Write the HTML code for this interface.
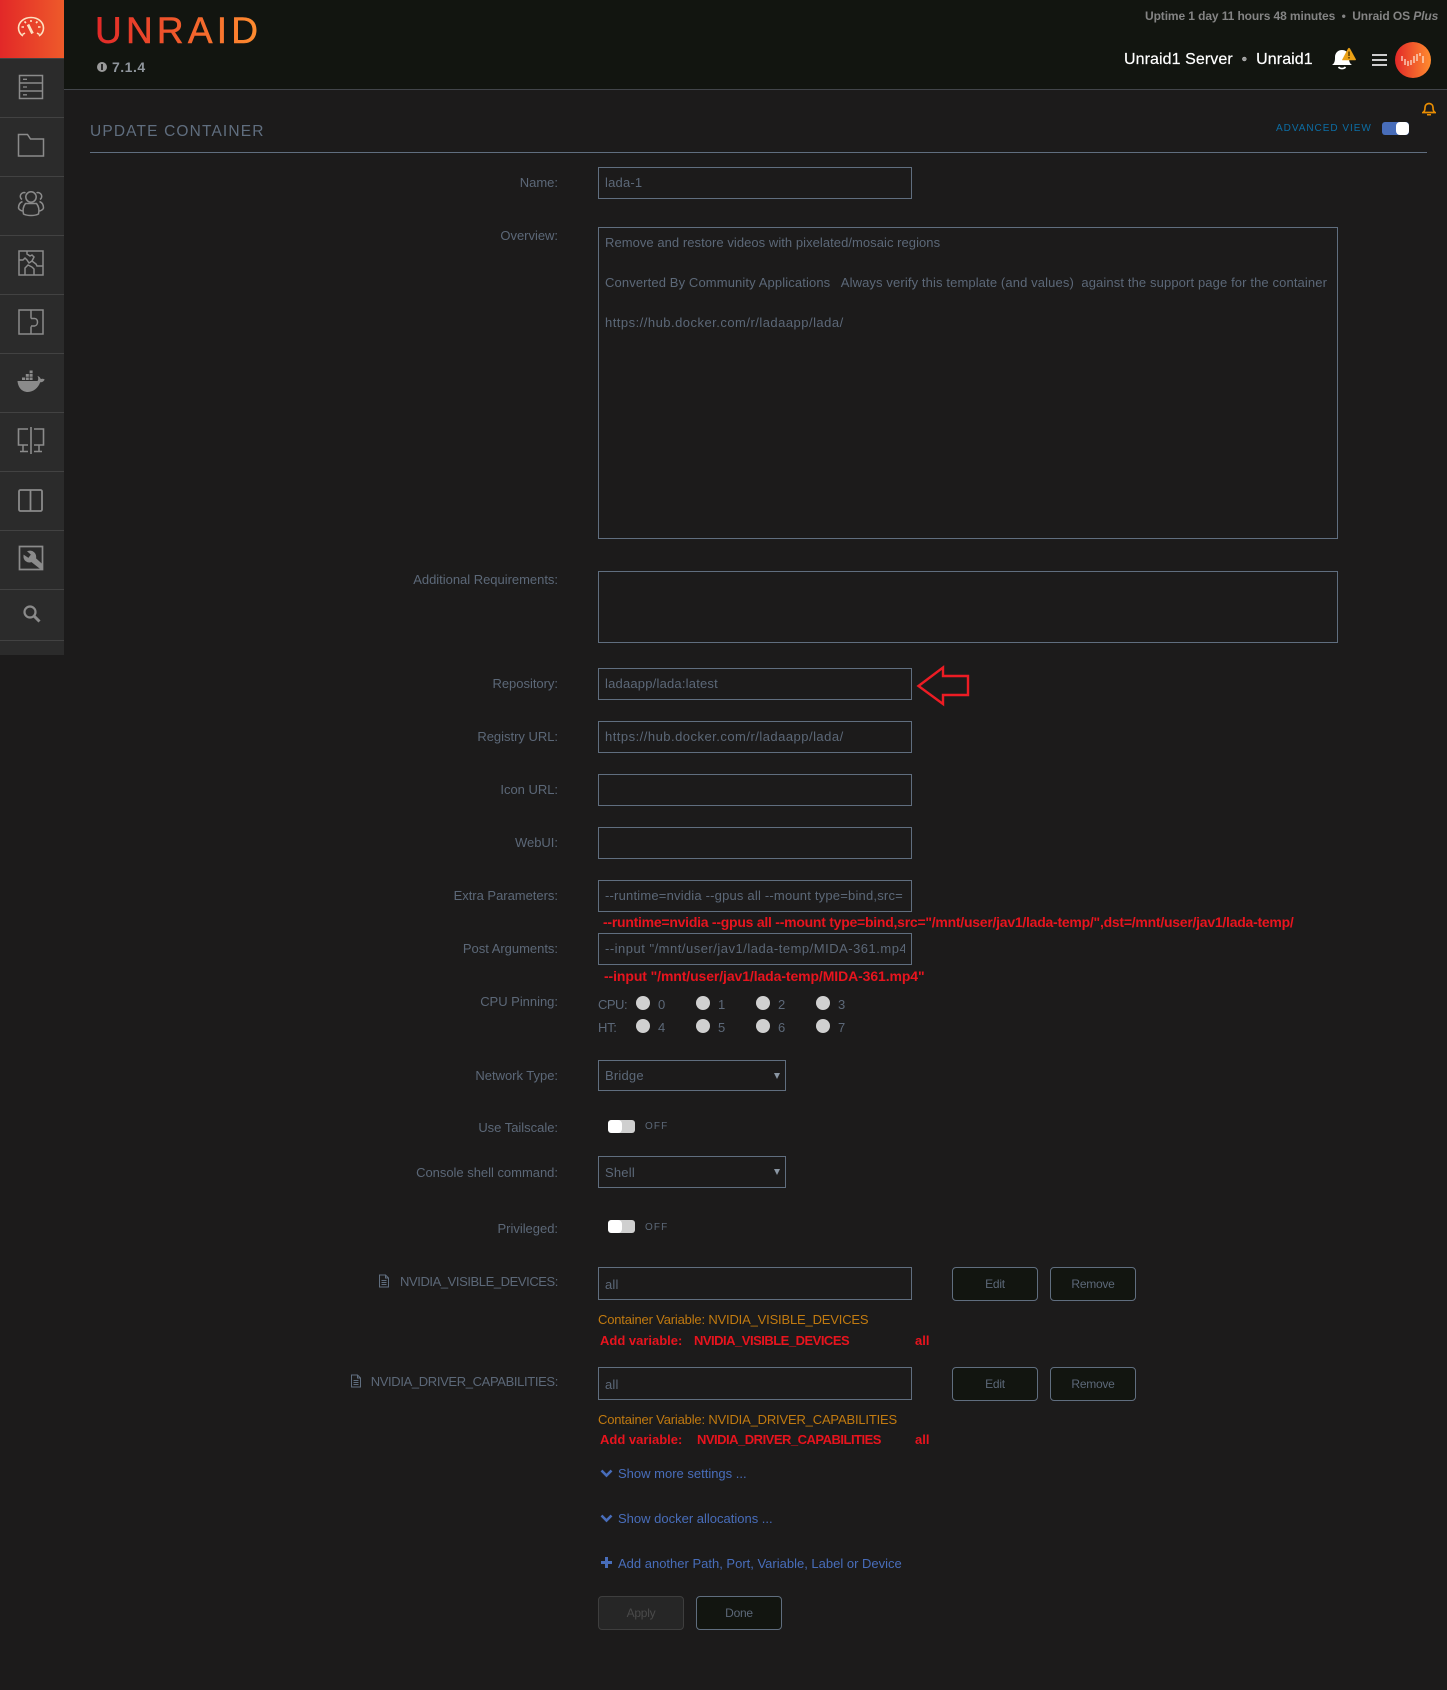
<!DOCTYPE html>
<html><head><meta charset="utf-8"><title>Update Container</title>
<style>
html,body{margin:0;padding:0;background:#1c1b1b}
body{position:relative;width:1447px;height:1690px;overflow:hidden;font-family:"Liberation Sans",sans-serif;font-size:13px;color:#5c6878}
div,svg{position:absolute}
.t{line-height:16px;white-space:nowrap}
.l{right:889px;line-height:16px;white-space:nowrap;letter-spacing:-.02px}
.i{left:598px;width:312px;height:30px;border:1px solid #606e7f;line-height:30px;white-space:nowrap;overflow:hidden;letter-spacing:.2px}
.i span{display:block;margin:0 6px;overflow:hidden}
.s{left:598px;width:186px;height:29px;border:1px solid #606e7f;line-height:29px;text-indent:6px;letter-spacing:.2px}
.s:after{content:"";position:absolute;right:5px;top:12px;border:3.5px solid transparent;border-top:6px solid #8a96a3;border-bottom:0}
.sep{left:0;width:64px;height:1px;background:#424242}
.ic{left:17px;width:28px;height:28px;fill:none;stroke:#8b8b8b;stroke-width:1.5}
.b{border:1px solid #606e7f;border-radius:4px;background:#121510;width:84px;height:32px;line-height:32px;text-align:center;font-size:12px;letter-spacing:-.25px}
.c{width:14px;height:14px;border-radius:50%;background:#d0d0d0}
.r{color:#e8141e;font-weight:bold;white-space:nowrap;line-height:16px}
.o{color:#c17a10;left:598px;line-height:16px;white-space:nowrap;letter-spacing:-.18px}
.k{color:#486dba;left:618px;line-height:16px;white-space:nowrap}
.tg{left:608px;width:27px;height:13px;border-radius:3px;background:#cfcfcf}
.tg:before{content:"";position:absolute;left:0;top:0;width:14px;height:13px;border-radius:4px;background:#fff}
.off{left:645px;font-size:10px;letter-spacing:1.1px;line-height:12px}
</style></head><body>

<!-- header -->
<div style="left:0;top:0;width:1447px;height:89px;background:#121510"></div>
<div style="left:0;top:89px;width:1447px;height:1px;background:#42454a"></div>

<!-- sidebar -->
<div style="left:0;top:0;width:64px;height:655px;background:#2b2b2b"></div>
<div style="left:0;top:0;width:64px;height:58px;background:linear-gradient(90deg,#e22828,#ee5a2a)"></div>
<div class="sep" style="top:58px"></div><div class="sep" style="top:117px"></div><div class="sep" style="top:176px"></div><div class="sep" style="top:235px"></div><div class="sep" style="top:294px"></div><div class="sep" style="top:353px"></div><div class="sep" style="top:412px"></div><div class="sep" style="top:471px"></div><div class="sep" style="top:530px"></div><div class="sep" style="top:589px"></div><div class="sep" style="top:640px"></div>

<svg class="ic" style="top:14px;stroke:#fde0c0;stroke-width:1.6" viewBox="0 0 28 28"><path d="M6 22C3 20 1.500 17 1.500 14 1.500 8 7 3.500 14 3.500S26.500 8 26.500 14C26.500 17 25 20 22 22"/><path d="M5.500 20.500 8 19M22.500 20.500 20 19M4.500 13h2.500M21 13h2.500M14 6v2M7.500 7.500l1.500 1.500M20.500 7.500l-1.500 1.500"/><path d="M11 10.500l4.500 9" stroke-width="2.800"/></svg>
<svg class="ic" style="top:73px" viewBox="0 0 28 28"><path d="M2.500 2.500h23v23h-23zM2.500 10h23M2.500 18h23"/><path d="M6 6.300h4M6 14h4M6 21.800h4" stroke-width="1.300"/></svg>
<svg class="ic" style="top:131px" viewBox="0 0 28 28"><path d="M1.500 3.500h9l3 4.500h13v17h-25z"/></svg>
<svg class="ic" style="top:190px" viewBox="0 0 28 28"><circle cx="14" cy="7" r="5.200"/><path d="M8.500 2.800A3.800 3.800 0 0 0 5 9.500M19.500 2.800A3.800 3.800 0 0 1 23 9.500"/><path d="M6.500 24c-1-4 0-8 2-10.500h11c2 2.500 3 6.500 2 10.500-4 2-11 2-15 0z"/><path d="M5.500 11.500C3 12.500 1.500 15 1.500 18c.5 1.500 2 2.500 4 3M22.500 11.500c2.500 1 4 3.500 4 6.500-.5 1.500-2 2.500-4 3"/></svg>
<svg class="ic" style="top:249px" viewBox="0 0 28 28"><path d="M2 2h24v24H2z"/><path d="M2 11h4l2-2 2 2 2 3 3-2 4 3 1 2 6 0M10 2v3l3 2 2-1 2 2-2 4M15 18l2 2v6M8 26v-7l3-3 4 2" stroke-width="1.500"/></svg>
<svg class="ic" style="top:308px" viewBox="0 0 28 28"><path d="M2 2h24v24H2zM14 2v8.500M14 18.500v7.500M14 10.500h3.500c4 0 4 7 0 7.500H14"/></svg>
<svg class="ic" style="top:368px;fill:#8b8b8b;stroke:none" viewBox="0 0 28 28"><path d="M.5 13h20c1-1.500 1-3 0-5 2 .5 3 2 3.200 3 1.500-.5 3-.3 4 .5-1 2-2.500 2.800-4.500 2.800C21 20.500 16 24 11 24 4.500 24 1 19 .5 13z"/><path d="M5 9.500h3V12H5zM8.800 9.500h3V12h-3zM12.600 9.500h3V12h-3zM8.800 6h3v2.800h-3zM12.600 6h3v2.800h-3zM12.600 2.500h3v2.800h-3z"/></svg>
<svg class="ic" style="top:426px" viewBox="0 0 28 28"><path d="M11 3H1.500v16H11M17 3h9.500v16H17M14 1v27" stroke-width="1.600"/><path d="M6 19v6M22 19v6M3 25.500h8M17 25.500h8"/></svg>
<svg class="ic" style="top:487px" viewBox="0 0 28 28"><rect x="2" y="3" width="23" height="21" rx="1.500" stroke-width="1.800"/><path d="M13.500 3v21" stroke-width="1.800"/></svg>
<svg class="ic" style="top:544px" viewBox="0 0 28 28"><path d="M2.500 2.500h23v23h-23z" stroke-width="1.700"/><path d="M24 25 14.500 17.500c-3.500 1.500-8-1-7.500-6l4.500 3 3-4-3.500-3c4.500-1.500 8.500 2 7.500 7l6 5.500V25z" fill="#8b8b8b" stroke-width="1"/></svg>
<svg class="ic" style="top:600px;left:18px" viewBox="0 0 28 28"><circle cx="12" cy="12" r="5.500" stroke-width="2.200"/><path d="M16 16l5.500 5.500" stroke-width="3"/></svg>

<!-- logo -->
<svg style="left:90px;top:8px;width:180px;height:44px" viewBox="90 8 180 44"><defs><linearGradient id="g" gradientUnits="userSpaceOnUse" x1="96" y1="0" x2="258" y2="0"><stop offset="0" stop-color="#e22828"/><stop offset="1" stop-color="#ff8c2f"/></linearGradient></defs><text x="95" y="43" font-family="Liberation Sans" font-size="37" fill="url(#g)" stroke="url(#g)" stroke-width=".5" textLength="163" lengthAdjust="spacing">UNRAID</text></svg>
<div style="left:97px;top:62px;width:10px;height:10px;border-radius:50%;background:#9a9a9a"></div>
<div style="left:101px;top:64px;width:2px;height:6px;background:#2a2a2a"></div>
<div class="t" style="left:112px;top:59px;font-size:14px;font-weight:bold;color:#8f959c;letter-spacing:.5px">7.1.4</div>

<!-- header right -->
<div class="t" style="left:1145px;top:8px;font-size:12px;font-weight:bold;color:#848484;letter-spacing:-.1px">Uptime 1 day 11 hours 48 minutes &nbsp;•&nbsp; Unraid OS <i>Plus</i></div>
<div class="t" style="left:1124px;top:52px;font-size:16px;color:#fff;letter-spacing:.08px;-webkit-text-stroke:.2px #fff">Unraid1 Server &nbsp;<span style="color:#999;font-size:15px">•</span>&nbsp; Unraid1</div>
<svg style="left:1330px;top:44px;width:30px;height:28px" viewBox="0 0 30 28"><path d="M2 21c3-2 3-5 3-8 0-4 3-7 7-7s7 3 7 7c0 3 0 6 3 8z" fill="#fff"/><path d="M8.500 23a4 3 0 0 0 7 0" fill="none" stroke="#fff" stroke-width="1.600"/><path d="M12 16 18 4.500l1-.8 1 .8 6 11-.5.8H12.500z" fill="#eba116"/><path d="M19 7.500v4.500M19 13v1.500" stroke="#5a3d05" stroke-width="1.500"/></svg>
<div style="left:1372px;top:54px;width:15px;height:2px;background:#ccc"></div><div style="left:1372px;top:59px;width:15px;height:2px;background:#ccc"></div><div style="left:1372px;top:64px;width:15px;height:2px;background:#ccc"></div>
<div style="left:1395px;top:42px;width:36px;height:36px;border-radius:50%;background:linear-gradient(90deg,#e22828,#ff8c2f)"></div>
<svg style="left:1400px;top:52px;width:26px;height:16px" viewBox="0 0 26 16"><path d="M2 4v5M5 7v6M8 9v5M11 8v5M14 4v7M17 2v7M20 1v3M23 4v7" stroke="#fde8d8" stroke-width="1.200" fill="none"/></svg>

<svg style="left:1422px;top:102px;width:14px;height:14px" viewBox="0 0 14 14"><path d="M1 10.500c1.500-1 2-2 2-5 0-2.500 1.800-4 4-4s4 1.500 4 4c0 3 .5 4 2 5z" fill="none" stroke="#e98d03" stroke-width="1.700"/><path d="M5 12h4v1.500H5z" fill="#e98d03"/></svg>

<!-- title -->
<div class="t" style="left:90px;top:124px;font-size:15.500px;letter-spacing:1.15px;color:#606e7f">UPDATE CONTAINER</div>
<div style="left:90px;top:152px;width:1337px;height:1px;background:#606e7f"></div>
<div class="t" style="left:1276px;top:121px;font-size:10px;letter-spacing:.97px;color:#0c6ea5">ADVANCED VIEW</div>
<div style="left:1382px;top:122px;width:27px;height:13px;border-radius:3px;background:#486dba"></div>
<div style="left:1396px;top:122px;width:13px;height:13px;border-radius:4px;background:#fff"></div>

<!-- labels -->
<div class="l" style="top:175px">Name:</div>
<div class="l" style="top:228px">Overview:</div>
<div class="l" style="top:572px">Additional Requirements:</div>
<div class="l" style="top:676px">Repository:</div>
<div class="l" style="top:729px">Registry URL:</div>
<div class="l" style="top:782px">Icon URL:</div>
<div class="l" style="top:835px">WebUI:</div>
<div class="l" style="top:888px">Extra Parameters:</div>
<div class="l" style="top:941px">Post Arguments:</div>
<div class="l" style="top:994px">CPU Pinning:</div>
<div class="l" style="top:1068px">Network Type:</div>
<div class="l" style="top:1120px">Use Tailscale:</div>
<div class="l" style="top:1165px">Console shell command:</div>
<div class="l" style="top:1221px">Privileged:</div>
<div class="l" style="top:1274px;letter-spacing:-.42px">NVIDIA_VISIBLE_DEVICES:</div>
<div class="l" style="top:1374px;letter-spacing:-.36px">NVIDIA_DRIVER_CAPABILITIES:</div>

<svg style="left:378px;top:1274px;width:12px;height:14px" viewBox="0 0 12 14"><path d="M1.500 1h6l3 3v9h-9zM7.500 1v3h3M3.500 6.500h5M3.500 8.500h5M3.500 10.500h5" fill="none" stroke="#606e7f"/></svg>
<svg style="left:350px;top:1374px;width:12px;height:14px" viewBox="0 0 12 14"><path d="M1.500 1h6l3 3v9h-9zM7.500 1v3h3M3.500 6.500h5M3.500 8.500h5M3.500 10.500h5" fill="none" stroke="#606e7f"/></svg>

<!-- inputs -->
<div class="i" style="top:167px"><span>lada-1</span></div>
<div class="i" style="top:227px;width:738px;height:310px"></div>
<div class="t" style="left:605px;top:235px;letter-spacing:.05px">Remove and restore videos with pixelated/mosaic regions</div>
<div class="t" style="left:605px;top:275px;letter-spacing:.12px;white-space:pre">Converted By Community Applications   Always verify this template (and values)  against the support page for the container</div>
<div class="t" style="left:605px;top:315px;letter-spacing:.48px">https://hub.docker.com/r/ladaapp/lada/</div>
<div class="i" style="top:571px;width:738px;height:70px"></div>
<div class="i" style="top:668px"><span>ladaapp/lada:latest</span></div>
<div class="i" style="top:721px;letter-spacing:.48px"><span>https://hub.docker.com/r/ladaapp/lada/</span></div>
<div class="i" style="top:774px"></div>
<div class="i" style="top:827px"></div>
<div class="i" style="top:880px"><span>--runtime=nvidia --gpus all --mount type=bind,src=</span></div>
<div class="i" style="top:933px;letter-spacing:.5px"><span>--input "/mnt/user/jav1/lada-temp/MIDA-361.mp4"</span></div>

<svg style="left:915px;top:662px;width:56px;height:48px" viewBox="915 662 56 48"><path d="M918.500 686 943 667.500V676h25v19h-25v9z" fill="none" stroke="#ed1c24" stroke-width="2.400"/></svg>

<div class="r" style="left:603px;top:914px;font-size:14px;letter-spacing:-.25px">--runtime=nvidia --gpus all --mount type=bind,src="/mnt/user/jav1/lada-temp/",dst=/mnt/user/jav1/lada-temp/</div>
<div class="r" style="left:604px;top:968px;font-size:14px;letter-spacing:-.1px">--input "/mnt/user/jav1/lada-temp/MIDA-361.mp4"</div>

<!-- CPU -->
<div class="t" style="left:598px;top:997px;letter-spacing:-.5px">CPU:</div><div class="t" style="left:598px;top:1020px;letter-spacing:-.3px">HT:</div>
<div class="c" style="left:636px;top:996px"></div><div class="c" style="left:696px;top:996px"></div><div class="c" style="left:756px;top:996px"></div><div class="c" style="left:816px;top:996px"></div>
<div class="c" style="left:636px;top:1019px"></div><div class="c" style="left:696px;top:1019px"></div><div class="c" style="left:756px;top:1019px"></div><div class="c" style="left:816px;top:1019px"></div>
<div class="t" style="left:658px;top:997px">0</div><div class="t" style="left:718px;top:997px">1</div><div class="t" style="left:778px;top:997px">2</div><div class="t" style="left:838px;top:997px">3</div>
<div class="t" style="left:658px;top:1020px">4</div><div class="t" style="left:718px;top:1020px">5</div><div class="t" style="left:778px;top:1020px">6</div><div class="t" style="left:838px;top:1020px">7</div>

<div class="s" style="top:1060px">Bridge</div>
<div class="tg" style="top:1120px"></div><div class="off" style="top:1121px">OFF</div>
<div class="s" style="top:1156px;height:30px;line-height:31px">Shell</div>
<div class="tg" style="top:1220px"></div><div class="off" style="top:1222px">OFF</div>

<!-- variables -->
<div class="i" style="top:1267px;height:31px;line-height:33px"><span>all</span></div>
<div class="b" style="left:952px;top:1267px">Edit</div><div class="b" style="left:1050px;top:1267px">Remove</div>
<div class="o" style="top:1312px">Container Variable: NVIDIA_VISIBLE_DEVICES</div>
<div class="r" style="left:600px;top:1333px">Add variable:</div><div class="r" style="left:694px;top:1333px;letter-spacing:-.5px">NVIDIA_VISIBLE_DEVICES</div><div class="r" style="left:915px;top:1333px">all</div>

<div class="i" style="top:1367px;height:31px;line-height:33px"><span>all</span></div>
<div class="b" style="left:952px;top:1367px">Edit</div><div class="b" style="left:1050px;top:1367px">Remove</div>
<div class="o" style="top:1412px">Container Variable: NVIDIA_DRIVER_CAPABILITIES</div>
<div class="r" style="left:600px;top:1432px">Add variable:</div><div class="r" style="left:697px;top:1432px;letter-spacing:-.5px">NVIDIA_DRIVER_CAPABILITIES</div><div class="r" style="left:915px;top:1432px">all</div>

<!-- links -->
<svg style="left:600px;top:1469px;width:13px;height:9px" viewBox="0 0 13 9"><path d="M1.500 1.500 6.500 6.500l5-5" fill="none" stroke="#486dba" stroke-width="2.600"/></svg>
<div class="k" style="top:1466px">Show more settings ...</div>
<svg style="left:600px;top:1514px;width:13px;height:9px" viewBox="0 0 13 9"><path d="M1.500 1.500 6.500 6.500l5-5" fill="none" stroke="#486dba" stroke-width="2.600"/></svg>
<div class="k" style="top:1511px">Show docker allocations ...</div>
<svg style="left:601px;top:1557px;width:11px;height:11px" viewBox="0 0 11 11"><path d="M5.500 0v11M0 5.500h11" stroke="#486dba" stroke-width="3"/></svg>
<div class="k" style="top:1556px">Add another Path, Port, Variable, Label or Device</div>

<div class="b" style="left:598px;top:1596px;background:#262626;border-color:#3e3e3e;color:#4a4a4a">Apply</div>
<div class="b" style="left:696px;top:1596px">Done</div>
</body></html>
